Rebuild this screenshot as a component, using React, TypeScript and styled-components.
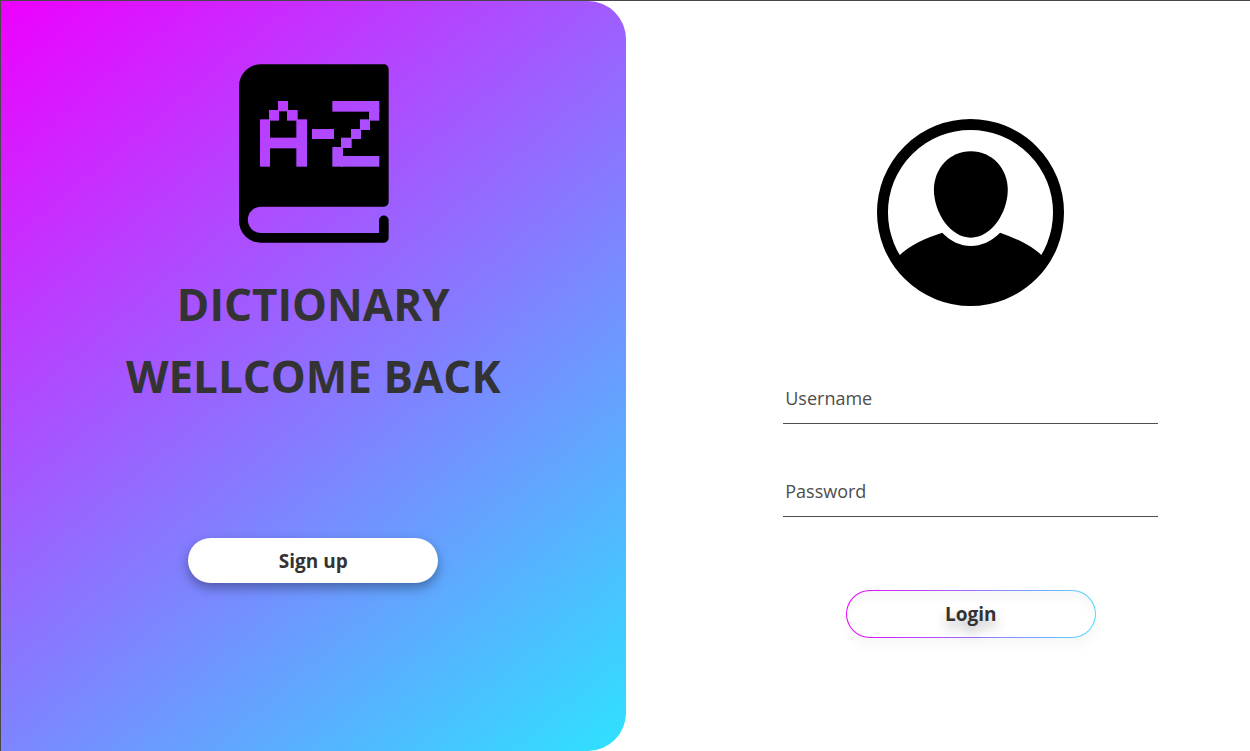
import React from "react";
import styled, { createGlobalStyle } from "styled-components";

const GlobalStyle = createGlobalStyle`
  * { box-sizing: border-box; }
  body {
    margin: 0;
    background: #ffffff;
    color: #333333;
    font-family: "Segoe UI", "Open Sans", "Noto Sans", sans-serif;
  }
`;

const Page = styled.main`
  display: grid;
  grid-template-columns: 1fr 1fr;
  min-height: 100vh;
  border-top: 1px solid #484848;
  border-left: 1px solid #484848;
`;

const WelcomePanel = styled.section`
  display: flex;
  flex-direction: column;
  align-items: center;
  padding: 63px 24px 48px;
  border-radius: 0 38px 38px 0;
  background: linear-gradient(140deg, #ee00ff, #2ee2ff);
`;

const Titles = styled.div`
  margin: 25px 0 126px;
  text-align: center;
`;

const Title = styled.h1`
  margin: 0;
  font-size: 44px;
  font-weight: 700;
  line-height: 72px;
`;

const LoginPanel = styled.section`
  display: flex;
  flex-direction: column;
  align-items: center;
  padding: 118px 0 48px 66px;
`;

const LoginForm = styled.form`
  display: flex;
  flex-direction: column;
  align-items: center;
  width: 100%;
  max-width: 375px;
  margin-top: 67px;
`;

const Field = styled.input`
  width: 100%;
  height: 51px;
  margin-bottom: 42px;
  padding: 0 2px;
  border: 0;
  border-bottom: 1px solid #4d4d4d;
  outline: 0;
  background: transparent;
  color: #333333;
  font: 400 18px/24px "Segoe UI", "Open Sans", "Noto Sans", sans-serif;
  &::placeholder { color: #4d4d4d; opacity: 1; }
`;

const PillButton = styled.button<{ $outlined?: boolean }>`
  width: 250px;
  height: ${(p) => (p.$outlined ? 48 : 45)}px;
  margin-top: ${(p) => (p.$outlined ? 31 : 0)}px;
  padding: 0;
  border: ${(p) => (p.$outlined ? "1px solid transparent" : "0")};
  border-radius: 24px;
  background: ${(p) =>
    p.$outlined
      ? "linear-gradient(#fff, #fff) padding-box, linear-gradient(90deg, #ee00ff, #4fdcff) border-box"
      : "#ffffff"};
  box-shadow: ${(p) =>
    p.$outlined
      ? "0 7px 14px rgba(0, 0, 0, 0.04), inset 0 8px 10px rgba(0, 0, 0, 0.03)"
      : "0 5px 12px rgba(0, 0, 0, 0.35)"};
  text-shadow: ${(p) => (p.$outlined ? "0 7px 12px rgba(0, 0, 0, 0.3)" : "none")};
  color: #333333;
  font: 700 19px/24px "Segoe UI", "Open Sans", "Noto Sans", sans-serif;
  cursor: pointer;
`;

/* Pixel blocks cut out of the cover: [x, y, width, height] */
const coverBlocks = [
  [174, 153, 30, 31], [147, 180, 30, 32], [201, 180, 32, 32],
  [120, 208, 30, 142], [229, 208, 32, 142], [148, 263, 83, 32],
  [276, 237, 66, 30],
  [337, 153, 141, 32], [447, 180, 31, 32], [420, 208, 30, 32],
  [393, 237, 30, 30], [363, 263, 32, 31], [337, 291, 32, 59], [363, 318, 115, 32],
];

const BookLogo = () => (
  <svg width="151" height="179" viewBox="54 42 453 537" role="img" aria-label="Dictionary">
    <mask id="cover" maskUnits="userSpaceOnUse" x="50" y="40" width="470" height="550">
      <rect x="50" y="40" width="470" height="550" fill="#fff" />
      {coverBlocks.map(([x, y, w, h]) => (
        <rect key={`${x}-${y}`} x={x} y={y} width={w} height={h} fill="#000" />
      ))}
    </mask>
    <path
      mask="url(#cover)"
      d="M122 43H492a14 14 0 0 1 14 14V456a14 14 0 0 1-14 14H123a39.500 39.500 0 0 0 0 79H477V511a14.500 14.500 0 0 1 29 0V564a14 14 0 0 1-14 14H122a65 65 0 0 1-65-65V108a65 65 0 0 1 65-65z"
    />
  </svg>
);

const Avatar = () => (
  <svg width="187" height="187" viewBox="36 41 562 562" role="img" aria-label="User">
    <circle cx="317" cy="322" r="264.500" fill="none" stroke="#000" strokeWidth="33" />
    <path d="M318 138C382 138 429 190 429 254C429 322 380 398 318 398C256 398 207 322 207 254C207 190 254 138 318 138z" />
    <path d="M98 456C130 424 178 400 232 383C282 436 354 436 406 383C460 402 508 425 536 456L548 478A281 281 0 0 1 86 478z" />
  </svg>
);

export default function App() {
  return (
    <>
      <GlobalStyle />
      <Page>
        <WelcomePanel>
          <BookLogo />
          <Titles>
            <Title>DICTIONARY</Title>
            <Title as="h2">WELLCOME BACK</Title>
          </Titles>
          <PillButton type="button">Sign up</PillButton>
        </WelcomePanel>
        <LoginPanel>
          <Avatar />
          <LoginForm onSubmit={(e) => e.preventDefault()}>
            <Field type="text" placeholder="Username" aria-label="Username" />
            <Field type="password" placeholder="Password" aria-label="Password" />
            <PillButton type="submit" $outlined>Login</PillButton>
          </LoginForm>
        </LoginPanel>
      </Page>
    </>
  );
}
